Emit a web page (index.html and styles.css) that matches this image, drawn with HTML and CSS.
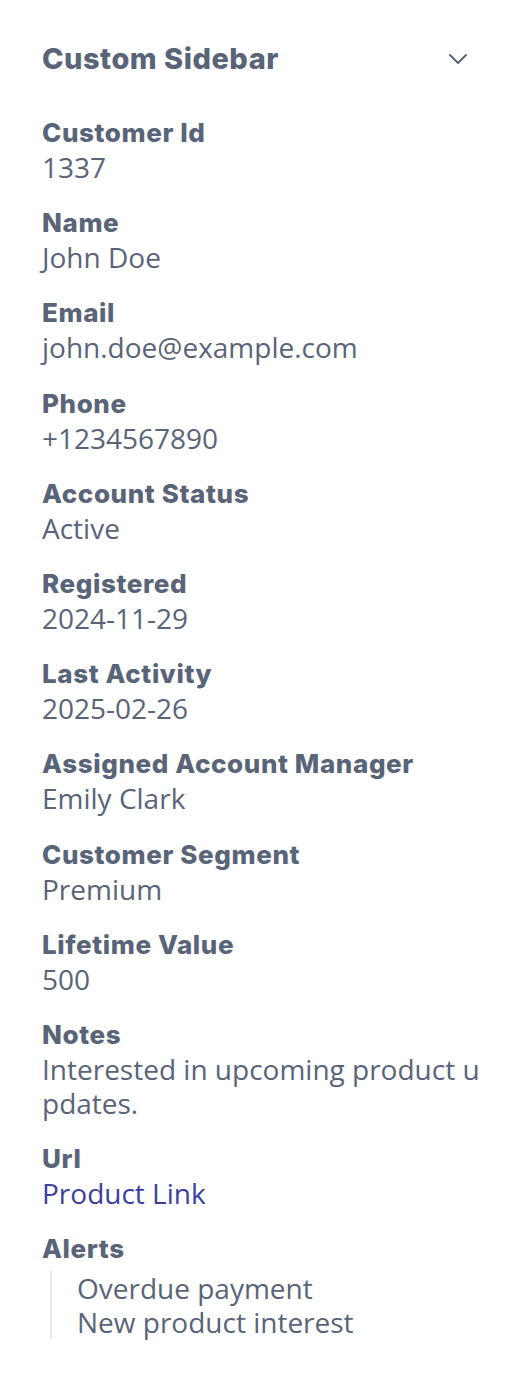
FILE: index.html
```html
<!DOCTYPE html>
<html>
<head>
  <meta charset="UTF-8">
  <link rel="stylesheet" href="styles.css">
</head>
<body>
  <div class="sidebar">
    <div class="header">
      <h2>Custom Sidebar</h2>
      <svg class="chevron" width="22" height="14" viewBox="0 0 22 14" fill="none" stroke="currentColor" stroke-width="2" stroke-linecap="round" stroke-linejoin="round">
        <polyline points="3 3 11 11 19 3"></polyline>
      </svg>
    </div>

    <div class="field">
      <div class="label">Customer Id</div>
      <div class="value">1337</div>
    </div>
    <div class="field">
      <div class="label">Name</div>
      <div class="value">John Doe</div>
    </div>
    <div class="field">
      <div class="label">Email</div>
      <div class="value">john.doe@example.com</div>
    </div>
    <div class="field">
      <div class="label">Phone</div>
      <div class="value">+1234567890</div>
    </div>
    <div class="field">
      <div class="label">Account Status</div>
      <div class="value">Active</div>
    </div>
    <div class="field">
      <div class="label">Registered</div>
      <div class="value">2024-11-29</div>
    </div>
    <div class="field">
      <div class="label">Last Activity</div>
      <div class="value">2025-02-26</div>
    </div>
    <div class="field">
      <div class="label">Assigned Account Manager</div>
      <div class="value">Emily Clark</div>
    </div>
    <div class="field">
      <div class="label">Customer Segment</div>
      <div class="value">Premium</div>
    </div>
    <div class="field">
      <div class="label">Lifetime Value</div>
      <div class="value">500</div>
    </div>
    <div class="field">
      <div class="label">Notes</div>
      <div class="value">Interested in upcoming product updates.</div>
    </div>
    <div class="field">
      <div class="label">Url</div>
      <div class="value"><a href="#" class="link">Product Link</a></div>
    </div>
    <div class="field">
      <div class="label">Alerts</div>
      <div class="alerts">
        <div class="value">Overdue payment</div>
        <div class="value">New product interest</div>
      </div>
    </div>
  </div>
</body>
</html>
```

FILE: styles.css
```css
body {
  margin: 0;
  background: #ffffff;
  color: #5a6478;
}

.sidebar {
  padding: 38px 42px 30px 42px;
}

.header {
  display: flex;
  justify-content: space-between;
  align-items: center;
  margin-bottom: 35px;
}

.header h2 {
  margin: 0;
  font-family: Inter, sans-serif;
  font-size: 29px;
  font-weight: 800;
  letter-spacing: 0.5px;
  line-height: 42px;
  color: #5a6478;
}

.chevron {
  color: #5a6478;
  margin-right: 15px;
}

.field {
  margin-bottom: 21.2px;
}

.label {
  font-family: Inter, sans-serif;
  font-size: 26px;
  font-weight: 800;
  letter-spacing: 0.6px;
  line-height: 35px;
  color: #5a6478;
}

.value {
  font-family: "Open Sans", sans-serif;
  font-size: 28px;
  line-height: 34px;
  color: #5a6478;
  word-break: break-all;
}

.link {
  color: #3c3f9e;
  text-decoration: none;
}

.alerts {
  margin-top: 5px;
  margin-left: 8px;
  padding-left: 25px;
  border-left: 2px solid #e6e8ec;
}
```
